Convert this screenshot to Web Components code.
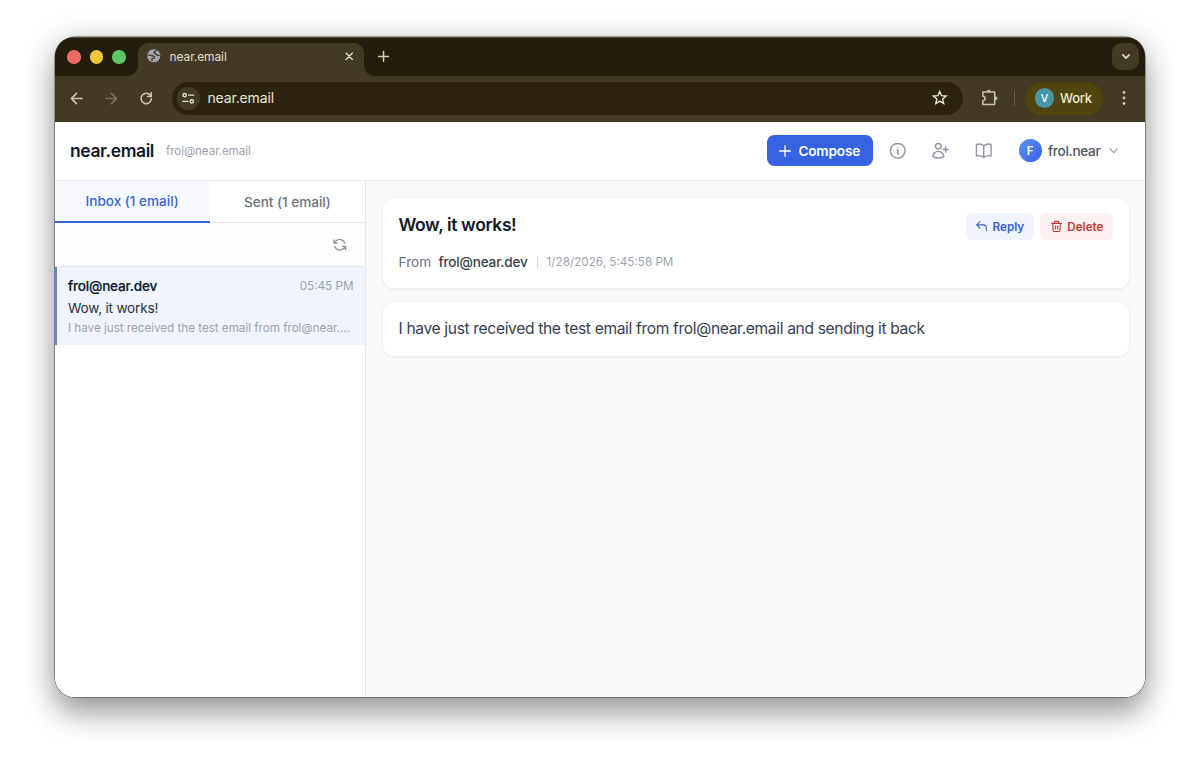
<!DOCTYPE html>
<html lang="en">
<head>
<meta charset="utf-8">
<title>near.email</title>
<style>
html,body{margin:0;height:100%;background:#fff;overflow:hidden}
body{font-family:Inter,"Liberation Sans",sans-serif;box-sizing:border-box;padding:37px 55px 72px 54.500px;height:769px}
</style>
</head>
<body>
<browser-window>
  <tab-strip slot="tabs">near.email</tab-strip>
  <browser-toolbar slot="toolbar">near.email</browser-toolbar>
  <mail-app></mail-app>
</browser-window>
<script>
function component(name, css, html) {
  const t = document.createElement('template');
  t.innerHTML = `<style>*{box-sizing:border-box}:host{display:block;box-sizing:border-box}${css}</style>${html}`;
  customElements.define(name, class extends HTMLElement {
    constructor() {
      super();
      this.attachShadow({mode: 'open'}).appendChild(t.content.cloneNode(true));
    }
  });
}

const ICONS = {
  globe: ['0 0 16 16', '<circle cx="8" cy="8" r="7.800" fill="currentColor" stroke="none"/><path d="M1.300 7.200h2.600c1.500 0 2.200 1 3.600 1.300 1.700.3 2 1.700.8 2.300-1 .5-2.300.3-2.600 1.300-.1.500 0 .9.200 1.600M11 1.700c-.3 1.300-2.700 1-2.800 2.500 0 1.300 1.800 1.100 2.700 1.700.7.500.5 1.500 1.600 1.700.9.200 1.500-.1 2-.3" stroke="#423a24" stroke-width="1.600"/>'],
  close: ['0 0 10 10', '<path d="M1.300 1.300 8.700 8.700M8.700 1.300 1.300 8.700"/>'],
  plus: ['0 0 12 12', '<path d="M6 .7v10.600M.7 6h10.600"/>'],
  chevron: ['0 0 10 6', '<path d="M1 1l4 4 4-4"/>'],
  back: ['0 0 14 14', '<path d="M13 7H1.500M7 1.500 1.500 7 7 12.500"/>'],
  forward: ['0 0 14 14', '<path d="M1 7h11.500M7 1.500 12.500 7 7 12.500"/>'],
  reload: ['0 0 14 14', '<path d="M12 4.200A5.800 5.800 0 1 0 12.800 7.600"/><path d="M12.600.800v4.200H8.400"/>'],
  tune: ['0 0 14 14', '<circle cx="3" cy="3.500" r="1.800"/><path d="M7.400 3.500h5.600M1 10.500h5.600"/><circle cx="11" cy="10.500" r="1.800"/>'],
  star: ['0 0 16 16', '<path d="M8 1.500l1.900 4.400 4.700.4-3.600 3.100 1.100 4.600L8 11.500 3.900 14 5 9.400 1.400 6.300l4.700-.4z" stroke-linejoin="miter"/>'],
  puzzle: ['0 0 18 18', '<path d="M2 3.300h12.500v13.200H2v-4.100c3.200-.4 3.200-4.200 0-4.600z"/><path d="M6 3c.2-3 4.200-3 4.400 0z M15 7.600c3 .2 3 4.200 0 4.400z" fill="currentColor" stroke="none"/>'],
  dots: ['0 0 4 16', '<g fill="currentColor" stroke="none"><circle cx="2" cy="2.500" r="1.450"/><circle cx="2" cy="8" r="1.450"/><circle cx="2" cy="13.500" r="1.450"/></g>'],
  info: ['0 0 24 24', '<path d="m11.250 11.250.041-.020a.75.75 0 0 1 1.063.852l-.708 2.836a.75.75 0 0 0 1.063.853l.041-.021M21 12a9 9 0 1 1-18 0 9 9 0 0 1 18 0Zm-9-3.750h.008v.008H12V8.250Z"/>'],
  adduser: ['0 0 24 24', '<path d="M18 7.500v3m0 0v3m0-3h3m-3 0h-3m-2.250-4.125a3.375 3.375 0 1 1-6.750 0 3.375 3.375 0 0 1 6.750 0ZM3 19.235v-.110a6.375 6.375 0 0 1 12.750 0v.109A12.318 12.318 0 0 1 9.374 21c-2.331 0-4.512-.645-6.374-1.766Z" transform="translate(-.7 0) scale(1.040 1)"/>'],
  book: ['0 0 24 24', '<path d="M12 6.042A8.967 8.967 0 0 0 6 3.750c-1.052 0-2.062.180-3 .512v14.250A8.987 8.987 0 0 1 6 18c2.305 0 4.408.867 6 2.292m0-14.250a8.966 8.966 0 0 1 6-2.292c1.052 0 2.062.180 3 .512v14.250A8.987 8.987 0 0 0 18 18a8.967 8.967 0 0 0-6 2.292m0-14.250v14.250"/>'],
  sync: ['0 0 24 24', '<g transform="matrix(-1 0 0 1 24 0)"><path d="M16.023 9.348h4.992v-.001M2.985 19.644v-4.992m0 0h4.992m-4.993 0 3.181 3.183a8.250 8.250 0 0 0 13.803-3.700M4.031 9.865a8.250 8.250 0 0 1 13.803-3.700l3.181 3.182m0-4.991v4.990"/></g>'],
  reply: ['0 0 24 24', '<path d="M9 15 3 9m0 0 6-6M3 9h12a6 6 0 0 1 6 6v5"/>'],
  trash: ['0 0 24 24', '<path d="M3 6.300h18M5 6.300l.7 13a2.200 2.200 0 0 0 2.200 2h8.200a2.200 2.200 0 0 0 2.200-2l.7-13M8 6V4.300A2 2 0 0 1 10 2.500h4a2 2 0 0 1 2 1.800V6M9.700 10.500v6.500M14.300 10.500v6.500"/>']
};
customElements.define('ui-icon', class extends HTMLElement {
  connectedCallback() {
    const [box, body] = ICONS[this.getAttribute('name')];
    this.attachShadow({mode: 'open'}).innerHTML = `<style>:host{display:block;flex:none;line-height:0}svg{display:block;width:100%;height:100%;overflow:visible}</style>
      <svg viewBox="${box}" fill="none" stroke="currentColor" stroke-width="${this.getAttribute('weight') || 1.5}" stroke-linecap="round" stroke-linejoin="round">${body}</svg>`;
  }
});

component('browser-window', `
  :host{height:660px;border-radius:20px;background:#fff;box-shadow:0 0 0 .7px rgba(0,0,0,.45),0 17px 30px rgba(0,0,0,.33),0 3px 32px rgba(0,0,0,.17)}
  .frame{height:100%;border-radius:20px;overflow:hidden;display:flex;flex-direction:column;background:#241d0c}
  ::slotted(mail-app){flex:1;min-height:0}
`, `<div class="frame"><slot name="tabs"></slot><slot name="toolbar"></slot><slot></slot></div>`);

component('tab-strip', `
  :host{height:39px;background:#241d0c;display:flex;padding:0 6px 0 12.500px;box-shadow:inset 0 1px #57523f}
  .lights{display:flex;gap:9px;padding-top:13px;width:71px}
  .lights i{width:13.500px;height:13.500px;border-radius:50%}
  .tab{position:relative;margin-top:6px;width:226px;height:33px;border-radius:10px 10px 0 0;background:#423a24;display:flex;align-items:center;padding:0 11px 7px 9px;color:#e3dcc4;font-size:12px}
  .tab::before,.tab::after{content:"";position:absolute;bottom:0;width:10px;height:10px}
  .tab::before{left:-10px;background:radial-gradient(circle at 0 0,transparent 9.500px,#423a24 10px)}
  .tab::after{right:-10px;background:radial-gradient(circle at 100% 0,transparent 9.500px,#423a24 10px)}
  .name{margin-left:9px;flex:1;letter-spacing:-.1px}
  .new{margin:14px 0 0 14px;width:11px;height:11px;color:#d6cfae}
  .menu{margin:6px 0 0 auto;width:27px;height:27px;border-radius:9px;background:#423a24;display:grid;place-items:center;color:#e8e2c8}
`, `<div class="lights"><i style="background:#ed6a66"></i><i style="background:#f3c83c"></i><i style="background:#5fc665"></i></div>
  <div class="tab"><ui-icon name="globe" style="width:13.500px;height:13.500px;color:#a5a6ac"></ui-icon><span class="name"><slot></slot></span><ui-icon name="close" weight="1.600" style="width:8.500px;height:8.500px"></ui-icon></div>
  <ui-icon class="new" name="plus" weight="1.700"></ui-icon>
  <div class="menu"><ui-icon name="chevron" weight="1.900" style="width:8px;height:5px"></ui-icon></div>`);

component('browser-toolbar', `
  :host{height:46px;background:#423a24;display:flex;align-items:center;padding:0 19.500px 1px 15px;color:#cdc6a6;border-bottom:1px solid #352c18}
  .nav{display:flex;gap:22px;width:102px;flex:none}
  .url{width:791.500px;flex:none;height:33px;border-radius:17px;background:#2b2310;display:flex;align-items:center;padding:0 16px 0 5px;color:#ece6d3;font-size:14px}
  .site{width:23px;height:23px;border-radius:50%;background:#423a24;display:grid;place-items:center;margin-right:8px;color:#e3dcc4}
  .url span{flex:1;letter-spacing:-.15px;padding-bottom:1px}
  .sep{width:1px;height:15px;background:#665e44;margin:0 9.500px 0 16.500px}
  .profile{width:78px;height:33px;border-radius:17px;background:#50440f;display:flex;align-items:center;padding-left:10px;gap:6px;color:#f3ebc2;font-size:13px;font-weight:500;letter-spacing:-.2px}
  .profile b{width:19.500px;height:19.500px;border-radius:50%;background:#4796a7;color:#fff;font-size:10.500px;font-weight:500;display:grid;place-items:center}
`, `<div class="nav"><ui-icon name="back" weight="1.800" style="width:13px;height:13px"></ui-icon><ui-icon name="forward" weight="1.800" style="width:13px;height:13px;color:#7a7258"></ui-icon><ui-icon name="reload" weight="1.800" style="width:12.500px;height:12.500px"></ui-icon></div>
  <div class="url"><div class="site"><ui-icon name="tune" weight="1.600" style="width:12.500px;height:12.500px"></ui-icon></div><span><slot></slot></span><ui-icon name="star" weight="1.400" style="width:15.500px;height:15.500px"></ui-icon></div>
  <ui-icon name="puzzle" weight="1.600" style="width:17px;height:17px;margin-left:17.500px;margin-bottom:2px"></ui-icon>
  <div class="sep"></div>
  <div class="profile"><b>V</b>Work</div>
  <ui-icon name="dots" style="width:4px;height:16px;margin-left:auto"></ui-icon>`);

component('app-header', `
  :host{height:59px;background:#fff;border-bottom:1px solid #e6e9ed;display:flex;align-items:center;padding:0 27px 1px 15.500px;color:#9297a3}
  h1{margin:0 12px 0 0;font-size:17.500px;font-weight:600;color:#111827;letter-spacing:-.4px}
  .addr{font-size:11.700px;flex:1;white-space:nowrap;letter-spacing:-.12px;color:#9ca3af}
  .compose{width:106px;height:31px;border-radius:7.500px;background:#3662e3;color:#fff;display:flex;align-items:center;justify-content:center;gap:7.500px;font-size:13.600px;font-weight:600;letter-spacing:-.15px}
  .tool{width:19.500px;height:19.500px;margin-left:23.500px}
  .avatar{width:23.500px;height:23.500px;border-radius:50%;background:linear-gradient(135deg,#5b93f0,#3360e4);color:#fff;font-size:11.500px;font-weight:600;display:grid;place-items:center;margin:0 6px 0 25px}
  .user{font-size:13.600px;font-weight:500;color:#4b5563;letter-spacing:-.3px}
`, `<h1>near.email</h1><span class="addr">frol@near.email</span>
  <div class="compose"><ui-icon name="plus" weight="1.300" style="width:12px;height:12px"></ui-icon><span>Compose</span></div>
  <ui-icon class="tool" style="margin-left:15.500px" weight="1.800" name="info"></ui-icon><ui-icon class="tool" weight="1.800" name="adduser"></ui-icon><ui-icon class="tool" weight="1.800" name="book"></ui-icon>
  <div class="avatar">F</div><span class="user">frol.near</span><ui-icon name="chevron" weight="1.200" style="width:9.500px;height:5.500px;margin-left:8px"></ui-icon>`);

component('mail-tab', `
  :host{flex:1;height:42px;display:flex;align-items:center;justify-content:center;font-size:13.600px;font-weight:500;color:#6b7280;border-bottom:1px solid #e3e6ea;white-space:nowrap;letter-spacing:-.02px}
  :host([active]){color:#3b63d0;background:#f8f9ff;border-bottom:2px solid #3662d8;padding:0 0 1px}
`, `<slot></slot>`);

component('mail-item', `
  :host{height:78px;background:#eff4fe;border-left:2.500px solid #5f84dc;padding:10px 11.500px 0 11.500px;white-space:nowrap}
  .top{display:flex;justify-content:space-between;align-items:center;height:18.500px}
  .from{font-size:13.600px;font-weight:500;color:#111827;-webkit-text-stroke:.2px;letter-spacing:-.2px}
  .time{font-size:11.700px;color:#9ca3af}
  .subject{font-size:13.600px;color:#28303f;height:23px;line-height:25px;letter-spacing:-.2px}
  .preview{font-size:11.700px;color:#9ca3af;line-height:18px;letter-spacing:-.03px}
`, `<div class="top"><span class="from"><slot name="from"></slot></span><span class="time"><slot name="time"></slot></span></div>
  <div class="subject"><slot name="subject"></slot></div><div class="preview"><slot></slot></div>`);

component('mail-sidebar', `
  :host{width:311.500px;flex:none;background:#fff;border-right:1px solid #e3e6ea}
  .tabs{display:flex}
  .bar{height:44px;border-bottom:1px solid #e3e6ea;background:#fcfefd;display:flex;align-items:center;justify-content:flex-end;padding-right:17.500px;color:#8f9092}
`, `<div class="tabs"><mail-tab active>Inbox (1 email)</mail-tab><mail-tab>Sent (1 email)</mail-tab></div>
  <div class="bar"><ui-icon name="sync" weight="1.900" style="width:15.500px;height:15.500px"></ui-icon></div>
  <mail-item><span slot="from">frol@near.dev</span><span slot="time">05:45 PM</span><span slot="subject">Wow, it works!</span>I have just received the test email from frol@near....</mail-item>`);

component('mail-action', `
  :host{height:27px;border-radius:6px;display:flex;align-items:center;padding:0 9.500px;gap:4.500px;font-size:11.700px;font-weight:600;color:#3b5bd6;background:#eff4fe}
  :host([danger]){color:#c13a37;background:#fdf1f1}
`, `<slot name="icon"></slot><span><slot></slot></span>`);

component('mail-card', `
  :host{background:#fff;border:1px solid #f1f3f6;border-radius:12px;box-shadow:0 1px 2px rgba(0,0,0,.05);padding:0 15.500px}
`, `<slot></slot>`);

component('mail-reader', `
  :host{flex:1;background:#f9fafb;padding:16px 15.500px 16px 16px;display:flex;flex-direction:column;gap:12px;white-space:nowrap}
  .head{height:92px}
  .row{display:flex;align-items:center;gap:6.500px;padding-top:14.500px}
  h2{margin:0;padding-bottom:4px;flex:1;font-size:17.500px;line-height:24px;font-weight:600;color:#111827;letter-spacing:-.37px}
  .meta{display:flex;align-items:center;height:17px;margin-top:12.500px;font-size:13.600px;color:#6b7280}
  .meta b{font-weight:500;color:#374151;margin-left:7.500px;letter-spacing:-.2px}
  .meta i{width:1px;height:12px;background:#d1d5db;margin:0 9px}
  .meta time{font-size:11.700px;color:#9ca3af}
  .body{height:56px;font-size:15.600px;line-height:54px;color:#374151;letter-spacing:-.345px}
`, `<mail-card class="head"><div class="row"><h2>Wow, it works!</h2>
    <mail-action><ui-icon slot="icon" name="reply" weight="1.900" style="width:13px;height:13px"></ui-icon>Reply</mail-action>
    <mail-action danger><ui-icon slot="icon" name="trash" weight="2" style="width:13px;height:13px"></ui-icon>Delete</mail-action></div>
    <div class="meta">From<b>frol@near.dev</b><i></i><time>1/28/2026, 5:45:58 PM</time></div></mail-card>
  <mail-card class="body">I have just received the test email from frol@near.email and sending it back</mail-card>`);

component('mail-app', `
  :host{display:flex;flex-direction:column;background:#fff}
  main{flex:1;display:flex;min-height:0}
`, `<app-header></app-header><main><mail-sidebar></mail-sidebar><mail-reader></mail-reader></main>`);
</script>
</body>
</html>
